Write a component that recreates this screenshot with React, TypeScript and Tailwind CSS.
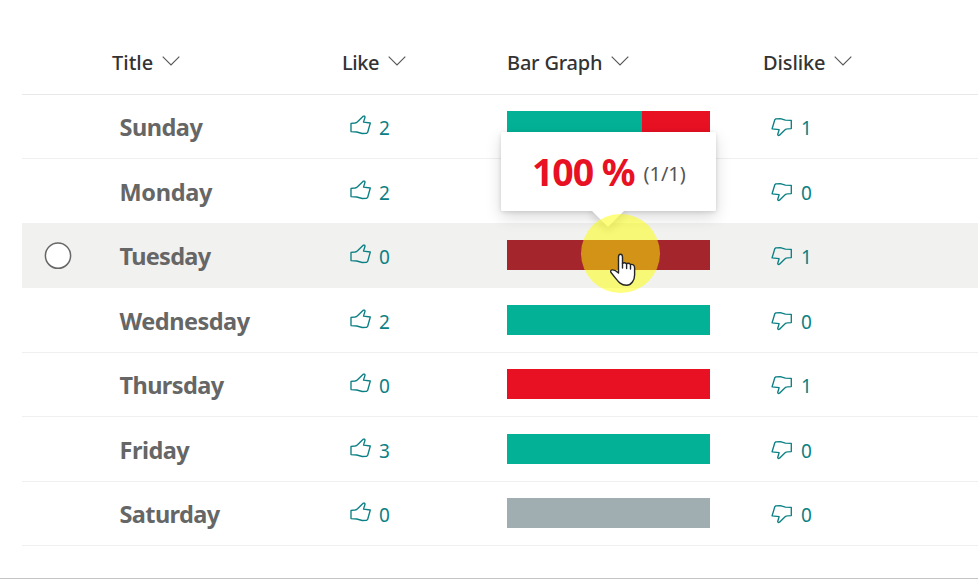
import React from "react";

type Row = {
  day: string;
  like: number;
  dislike: number;
  height: string;
  shift: string;
  border: string;
  tracking: string;
  hovered?: boolean;
};

const line = "border-[#efefef]";

const rows: Row[] = [
  { day: "Sunday", like: 2, dislike: 1, height: "h-[64px]", shift: "pt-0", border: line, tracking: "tracking-[-0.5px]" },
  { day: "Monday", like: 2, dislike: 0, height: "h-[64px]", shift: "pt-px", border: "border-white", tracking: "tracking-[-0.3px]" },
  { day: "Tuesday", like: 0, dislike: 1, height: "h-[65px]", shift: "pt-px", border: "border-[#f1f1ef]", tracking: "tracking-[-0.7px]", hovered: true },
  { day: "Wednesday", like: 2, dislike: 0, height: "h-[65px]", shift: "pt-px", border: line, tracking: "tracking-[-0.5px]" },
  { day: "Thursday", like: 0, dislike: 1, height: "h-[64px]", shift: "pt-0", border: line, tracking: "tracking-[-0.6px]" },
  { day: "Friday", like: 3, dislike: 0, height: "h-[65px]", shift: "pt-px", border: line, tracking: "tracking-[-0.5px]" },
  { day: "Saturday", like: 0, dislike: 0, height: "h-[64px]", shift: "pt-0", border: line, tracking: "tracking-[-0.6px]" },
];

const columns = "grid grid-cols-[90px_230px_165px_256px_215px]";

function Chevron() {
  return (
    <svg width="18" height="11" viewBox="0 0 18 11" fill="none" stroke="#555" strokeWidth="1.1">
      <path d="M0.7 0.7 9 9 17.3 0.7" />
    </svg>
  );
}

function Heading({ label, tracking }: { label: string; tracking: string }) {
  return (
    <div className="flex items-start gap-[8.5px]">
      <span className={`text-[20px] leading-7 font-medium ${tracking}`}>{label}</span>
      <span className="pt-[7px]"><Chevron /></span>
    </div>
  );
}

function ThumbUp() {
  return (
    <svg width="22" height="20" viewBox="0 0 22 20" fill="none" stroke="#0b8084" strokeWidth="1.35" strokeLinejoin="round">
      <path d="M1 8.4 5 8Q6.5 7.7 7.8 6.4L13.2 1.2Q14.8.7 15 2.2L13.5 7.1 20.3 8 17.7 17.2 16.6 18.4 12.2 18.5 6.8 17 1 16.6Z" />
    </svg>
  );
}

function ThumbDown() {
  return (
    <svg width="22" height="20" viewBox="0 0 22 20" fill="none" stroke="#0b8084" strokeWidth="1.35" strokeLinejoin="round">
      <path d="M20.3 3.4 14.4 3.1 9.3 1.6 4.9 1.8 3.8 2.8 1.1 11.8 8.1 12.7 6.7 17.5Q6.9 19 8.5 18.2L13.8 13Q15 11.9 16.3 11.9L20.3 11.6Z" />
    </svg>
  );
}

function Pointer() {
  return (
    <svg className="absolute left-[103px] top-[13px]" width="27" height="34" viewBox="0 0 27 34" fill="white" stroke="#262626" strokeWidth="1.4" strokeLinejoin="round" strokeLinecap="round">
      <path d="M8.5 20V4Q8.5 1.3 10.5 1.3T12.5 4V10.5Q14.5 9 16.5 10.7 18.6 9.4 20.4 11.4 24.6 10.8 24.6 15V22C24.6 27 21.5 32.2 16.5 32.2 11 32.2 8.5 29 5.7 25.4L1 19.5Q-.1 17.3 2.2 16.9 4.8 16.6 8.5 20Z" />
      <path d="M12.5 10.5V15M16.6 11V15.5M20.5 12V16" fill="none" />
    </svg>
  );
}

function Bar({ row }: { row: Row }) {
  const total = row.like + row.dislike;
  if (total === 0) return <div className="h-[30px] w-[203px] bg-[#a0aeb2]" />;
  return (
    <div className="flex h-[30px] w-[203px]">
      <div className="bg-[#03b296]" style={{ width: `${(row.like / total) * 100}%` }} />
      <div className={row.hovered ? "bg-[#a4262c]" : "bg-[#e81123]"} style={{ width: `${(row.dislike / total) * 100}%` }} />
    </div>
  );
}

function Callout() {
  return (
    <>
      <div className="absolute -left-[6px] -top-[108px] z-10 h-[79px] w-[215px] rounded-[2px] bg-white shadow-[0_6px_16px_rgba(0,0,0,0.15),0_1px_4px_rgba(0,0,0,0.13)]">
        <div className="absolute left-[95px] top-[66px] size-6 rotate-45 bg-white shadow-[3px_3px_8px_rgba(0,0,0,0.15)]" />
        <div className="relative flex h-full items-start rounded-[2px] bg-white pl-[31px] pt-[12px]">
          <span className="text-[37.5px] leading-[56px] font-bold tracking-[-1.1px] whitespace-nowrap text-[#e81123]">100 %</span>
          <span className="ml-[9px] pt-[16px] text-[20px] leading-[28px] text-[#555]">(1/1)</span>
        </div>
      </div>
      <div className="absolute left-[73.5px] -top-[26px] z-20 size-[79px] rounded-full bg-[#ffff00]/50" />
      <div className="absolute inset-0 z-30"><Pointer /></div>
    </>
  );
}

export default function App() {
  return (
    <div className="h-[579px] w-[978px] overflow-hidden border-b border-[#c4c4c4] bg-white pl-[22px] font-['Noto_Sans',sans-serif] text-[#333]">
      <div className={`${columns} h-[95px] border-b border-[#e8e8e8] pt-[49px]`}>
        <div />
        <Heading label="Title" tracking="tracking-[0px]" />
        <Heading label="Like" tracking="tracking-[-0.4px]" />
        <Heading label="Bar Graph" tracking="tracking-[-0.2px]" />
        <Heading label="Dislike" tracking="tracking-[-0.1px]" />
      </div>
      {rows.map((row) => (
        <div key={row.day} className={`${columns} ${row.height} ${row.shift} border-b ${row.border} ${row.hovered ? "bg-[#f1f1ef]" : ""}`}>
          <div className="pl-[22px] pt-[18px]">
            {row.hovered && (
              <svg width="28" height="28" viewBox="0 0 28 28">
                <circle cx="14" cy="13.7" r="12.6" fill="white" stroke="#666" strokeWidth="1.5" />
              </svg>
            )}
          </div>
          <div className={`pl-[7.5px] pt-[16px] text-[23.5px] leading-[33px] font-bold text-[#666] ${row.tracking}`}>{row.day}</div>
          <div className="flex items-start pl-[8px] pt-[20px] text-[#0b8084]">
            <ThumbUp />
            <span className="ml-[7px] text-[19px] leading-[27px]">{row.like}</span>
          </div>
          <div className="relative pt-[16px]">
            <div className="relative w-[203px]">
              <Bar row={row} />
              {row.hovered && <Callout />}
            </div>
          </div>
          <div className="flex items-start pl-[8px] pt-[20px] text-[#0b8084]">
            <span className="pt-[2px]"><ThumbDown /></span>
            <span className="ml-[8px] text-[19px] leading-[27px]">{row.dislike}</span>
          </div>
        </div>
      ))}
    </div>
  );
}
